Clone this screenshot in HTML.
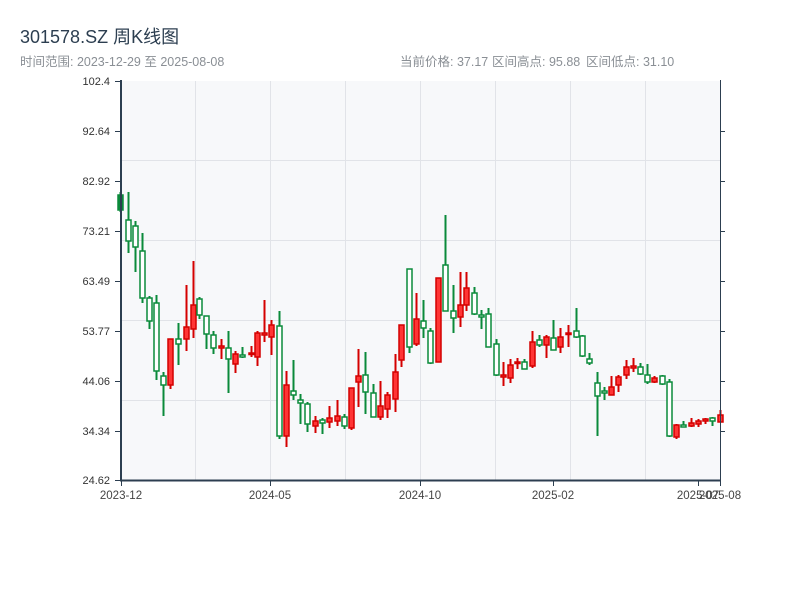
<!DOCTYPE html>
<html><head><meta charset="utf-8"><style>
html,body{margin:0;padding:0;background:#fff;width:800px;height:600px;overflow:hidden;font-family:"Liberation Sans","Noto Sans CJK SC",sans-serif}
.t{position:absolute;left:20px;top:23px;font-size:18px;color:#2c3e50}
.s{position:absolute;top:51px;font-size:12.5px;color:#8a8f95;white-space:nowrap}
svg{position:absolute;left:0;top:0}
</style></head><body>
<div class="t">301578.SZ 周K线图</div>
<div class="s" style="left:20px">时间范围: 2023-12-29 至 2025-08-08</div>
<div class="s" style="left:400px">当前价格: 37.17</div>
<div class="s" style="left:492px">区间高点: 95.88</div>
<div class="s" style="left:586px">区间低点: 31.10</div>
<svg id="c" width="800" height="600" xmlns="http://www.w3.org/2000/svg" font-family="Liberation Sans, sans-serif" font-size="11">
<rect x="121" y="81" width="599" height="399" fill="#f7f8fa"/>
<g stroke="#e1e3e8" stroke-width="1">
<line x1="195.5" y1="81" x2="195.5" y2="480"/><line x1="270.5" y1="81" x2="270.5" y2="480"/><line x1="345.5" y1="81" x2="345.5" y2="480"/><line x1="420.5" y1="81" x2="420.5" y2="480"/><line x1="495.5" y1="81" x2="495.5" y2="480"/><line x1="570.5" y1="81" x2="570.5" y2="480"/><line x1="645.5" y1="81" x2="645.5" y2="480"/>
<line x1="121" y1="160.5" x2="720" y2="160.5"/><line x1="121" y1="240.5" x2="720" y2="240.5"/><line x1="121" y1="320.5" x2="720" y2="320.5"/><line x1="121" y1="400.5" x2="720" y2="400.5"/>
</g>
<g id="k"></g>
<g stroke="#2c3e50">
<line x1="121" y1="80" x2="121" y2="481" stroke-width="2"/>
<line x1="720.5" y1="80" x2="720.5" y2="481" stroke-width="1"/>
<line x1="120" y1="480.5" x2="721" y2="480.5" stroke-width="2"/>
<line x1="115" y1="81.5" x2="121" y2="81.5"/><line x1="115" y1="131.5" x2="121" y2="131.5"/><line x1="115" y1="181.5" x2="121" y2="181.5"/><line x1="115" y1="231.5" x2="121" y2="231.5"/><line x1="115" y1="281.5" x2="121" y2="281.5"/><line x1="115" y1="331.5" x2="121" y2="331.5"/><line x1="115" y1="381.5" x2="121" y2="381.5"/><line x1="115" y1="431.5" x2="121" y2="431.5"/><line x1="115" y1="480.5" x2="121" y2="480.5"/>
<line x1="720" y1="131.5" x2="725" y2="131.5"/><line x1="720" y1="181.5" x2="725" y2="181.5"/><line x1="720" y1="231.5" x2="725" y2="231.5"/><line x1="720" y1="281.5" x2="725" y2="281.5"/><line x1="720" y1="331.5" x2="725" y2="331.5"/><line x1="720" y1="381.5" x2="725" y2="381.5"/><line x1="720" y1="431.5" x2="725" y2="431.5"/>
<line x1="121.5" y1="480" x2="121.5" y2="486"/><line x1="270.5" y1="480" x2="270.5" y2="486"/><line x1="420.5" y1="480" x2="420.5" y2="486"/><line x1="553.5" y1="480" x2="553.5" y2="486"/><line x1="698.5" y1="480" x2="698.5" y2="486"/><line x1="720.5" y1="480" x2="720.5" y2="486"/>
</g>
<g fill="#333" text-anchor="end">
<text x="110" y="85">102.4</text><text x="110" y="135">92.64</text><text x="110" y="185">82.92</text><text x="110" y="235">73.21</text><text x="110" y="285">63.49</text><text x="110" y="335">53.77</text><text x="110" y="385">44.06</text><text x="110" y="435">34.34</text><text x="110" y="484">24.62</text>
</g>
<g fill="#444" text-anchor="middle" font-size="11.5">
<text x="121" y="499">2023-12</text><text x="270" y="499">2024-05</text><text x="420" y="499">2024-10</text><text x="553" y="499">2025-02</text><text x="698" y="499">2025-07</text><text x="720" y="499">2025-08</text>
</g>
</svg>
<script>
var G='#0a8a3a',R='#d40000',RF='#ff3535';
var d=[[120,192,212,195,210,'gf'],
[127.7,192,253,220,241,'g'],[134.7,221,272,226,247,'g'],[141.7,233,303,251,298,'g'],[148.7,296,329,298,321,'g'],[156.3,295,380,303,371,'g'],[163.3,372,416,376,385,'g'],[170.3,339,389,339,385,'r'],[177.7,323,365,339,344,'g'],[185.7,285,351,327,339,'r'],[192.7,261,338,305,329,'r'],[199.3,297,319,299,315,'g'],[206.3,316,349,316,334,'g'],[213.3,331,354,335,348,'g'],[221.3,339,359,346,348,'r'],[228.3,331,393,348,359,'g'],[235.3,351,373,354,364,'r'],[242.3,347,358,355,357,'g'],[250.7,346,357,353,354,'r'],[257.3,331,366,333,357,'r'],[264.3,300,342,333,335,'r'],[271.3,320,355,325,337,'r'],[279.3,311,439,326,436,'g'],[286.3,371,447,385,436,'r'],[293.3,360,400,391,395,'g'],[300.3,394,424,400,403,'g'],[307.3,402,432,404,424,'g'],
[315.3,416,433,421,426,'r'],[322.3,418,434,420,423,'g'],[329.3,406,428,418,422,'r'],[336.7,400,426,416,421,'r'],[344.3,414,429,417,426,'g'],[351.3,388,430,388,428,'r'],[358.3,349,407,376,382,'r'],[365.3,352,414,375,392,'g'],[373.3,384,417,393,417,'g'],[380.3,381,420,406,417,'r'],[387.3,392,418,395,409,'r'],[394.7,354,412,372,399,'r'],[401.3,325,367,325,360,'r'],[409.3,269,353,269,347,'g'],[416.3,293,346,319,344,'r'],[423.3,300,338,321,328,'g'],[430.3,328,364,331,363,'g'],[438,278,362,278,362,'r'],[445.3,215,311,265,311,'g'],[452.7,285,333,311,318,'g'],[459.7,272,327,305,317,'r'],[466.3,272,311,288,305,'r'],[474.3,287,315,293,314,'g'],[481.3,310,329,315,317,'g'],[488.3,308,347,314,347,'g'],[495.7,339,376,344,375,'g'],[503.3,362,386,375,377,'r'],[510.3,359,383,365,378,'r'],[517.3,358,369,362,363,'r'],
[524.3,359,369,362,369,'g'],[532.3,331,368,342,366,'r'],[539.3,335,347,340,345,'g'],[546.3,335,358,337,345,'r'],[553.3,320,350,338,350,'g'],[560.3,328,353,337,347,'r'],[568.3,325,347,333,334,'r'],[575.7,308,338,331,337,'g'],[582.3,335,357,336,356,'g'],[589.3,353,365,359,363,'g'],[597.3,372,436,383,396,'g'],[604.3,387,400,391,393,'g'],[611.3,376,395,387,395,'r'],[618.3,375,392,377,385,'r'],[626.3,360,379,367,375,'r'],[633.3,358,372,366,368,'r'],[640.3,363,375,367,374,'g'],[647.3,364,384,375,382,'g'],[654.3,376,383,378,382,'r'],[662.3,375,385,376,384,'g'],[669.3,379,437,382,436,'g'],[676.3,424,439,425,437,'r'],[683.3,421,427,425,427,'g'],[691.3,418,427,423,426,'r'],[698.3,419,427,421,424,'r'],[705.3,418,424,419,421,'r'],[712.3,417,426,418,421,'g'],[720.3,410,422,415,422,'r']];
var s='';
d.forEach(function(c){var x=Math.round(c[0])+0.5,t=c[5];var col=t[0]=='g'?G:R;var fill=t=='g'?'#fff':(t=='gf'?G:RF);
s+='<line x1="'+x+'" y1="'+c[1]+'" x2="'+x+'" y2="'+c[2]+'" stroke="'+col+'" stroke-width="2"/>';
var h=Math.max(c[4]-c[3],1.5);
s+='<rect x="'+(x-2.5)+'" y="'+c[3]+'" width="5" height="'+h+'" fill="'+fill+'" stroke="'+col+'" stroke-width="1.5"/>';});
document.getElementById('k').innerHTML=s;
</script>
</body></html>
